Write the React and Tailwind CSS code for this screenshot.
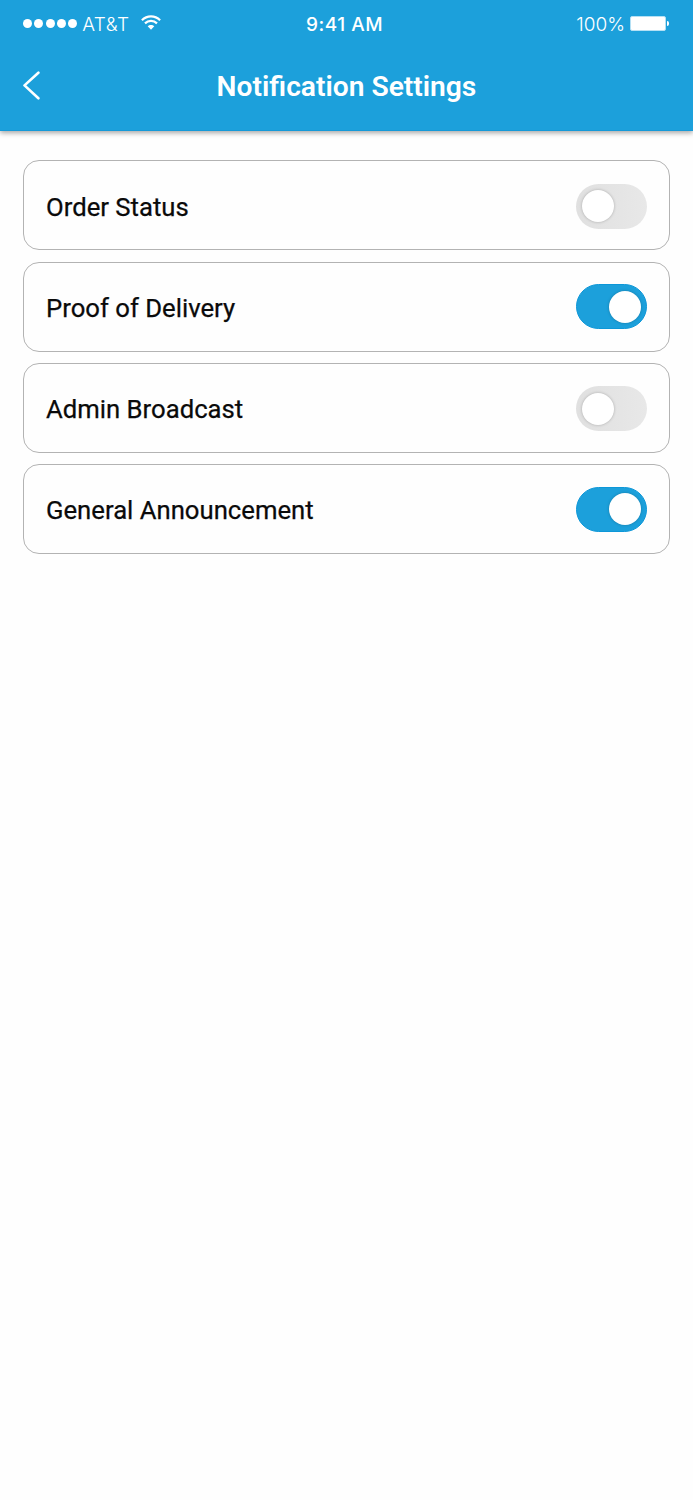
import { useState } from "react";

function StatusBar() {
  return (
    <div className="grid grid-cols-3 items-center h-[47px] pl-[23px] pr-6 font-['Inter',sans-serif] text-[19px]">
      <div className="flex items-center">
        <div className="flex gap-[2.3px]">
          {[1, 2, 3, 4, 5].map((dot) => (
            <span key={dot} className="w-[9px] h-[9px] rounded-full bg-white" />
          ))}
        </div>
        <span className="ml-[5px] pt-[3px] font-light tracking-[0.5px]">AT&amp;T</span>
        <svg className="ml-[11px] -mt-0.5" width="20" height="15" viewBox="0 0 20 15" fill="none">
          <path d="M0.9 5.2C6.1 0.1 13.9 0.1 19.1 5.2" stroke="white" strokeWidth="2.2" />
          <path d="M4 8.4C7.4 5 12.6 5 16 8.4" stroke="white" strokeWidth="2.2" />
          <path d="M6.7 11.3C8.5 9.5 11.5 9.5 13.3 11.3L10 14.7Z" fill="white" />
        </svg>
      </div>
      <span className="pt-[3px] pr-[3px] text-center font-medium tracking-[0.5px]">9:41 AM</span>
      <div className="flex items-center justify-end">
        <span className="pt-[3px] font-light">100%</span>
        <span className="ml-[5px] w-[36px] h-[15px] rounded-[2px] border border-[#b5e0f4] bg-white" />
        <span className="ml-px w-[2px] h-[5px] rounded-r-full bg-white" />
      </div>
    </div>
  );
}

function Toggle({ on, label, onClick }) {
  return (
    <button
      role="switch"
      aria-checked={on}
      aria-label={label}
      onClick={onClick}
      className={`flex items-center w-[71px] h-[45px] rounded-full ${
        on
          ? "justify-end px-[5px] bg-[#1ca0db] border border-[#0d97d8]"
          : "justify-start mt-0.5 px-1.5 bg-linear-to-r from-[#e0e0e0] to-[#e8e8e8]"
      }`}
    >
      <span className="w-8 h-8 rounded-full bg-white shadow-[0_0_3px_rgba(0,0,0,0.25)]" />
    </button>
  );
}

export default function App() {
  const [settings, setSettings] = useState([
    { title: "Order Status", on: false },
    { title: "Proof of Delivery", on: true },
    { title: "Admin Broadcast", on: false },
    { title: "General Announcement", on: true },
  ]);

  const toggle = (index) => {
    setSettings(
      settings.map((item, i) => (i === index ? { ...item, on: !item.on } : item))
    );
  };

  return (
    <div className="min-h-[1500px] bg-[#fefefe] font-['Roboto',sans-serif]">
      <header className="h-[131px] bg-[#1ca0db] text-white border-b border-[#1499d8] shadow-[0_2px_5px_rgba(0,0,0,0.35)]">
        <StatusBar />
        <div className="grid grid-cols-[60px_1fr_60px] items-center h-[78px]">
          <button aria-label="Back" className="pl-[23px]">
            <svg width="18" height="30" viewBox="0 0 18 30" fill="none">
              <path
                d="M15.4 1.7L1.5 14.4L15.4 27.3"
                stroke="white"
                strokeWidth="2.6"
                strokeLinecap="round"
                strokeLinejoin="round"
              />
            </svg>
          </button>
          <h1 className="pt-0.5 text-center text-[28.2px] font-semibold">
            Notification Settings
          </h1>
        </div>
      </header>

      <main className="flex flex-col gap-[11.3px] px-[23px] pt-[29.3px]">
        {settings.map((item, index) => (
          <div
            key={item.title}
            className="flex items-center justify-between h-[90px] px-[22px] rounded-[16px] border border-[#b3b3b3]"
          >
            <span className="pt-[3px] text-[25.7px] text-[#0a0a0a] [-webkit-text-stroke:0.25px_#0a0a0a]">
              {item.title}
            </span>
            <Toggle
              on={item.on}
              label={item.title}
              onClick={() => toggle(index)}
            />
          </div>
        ))}
      </main>
    </div>
  );
}
